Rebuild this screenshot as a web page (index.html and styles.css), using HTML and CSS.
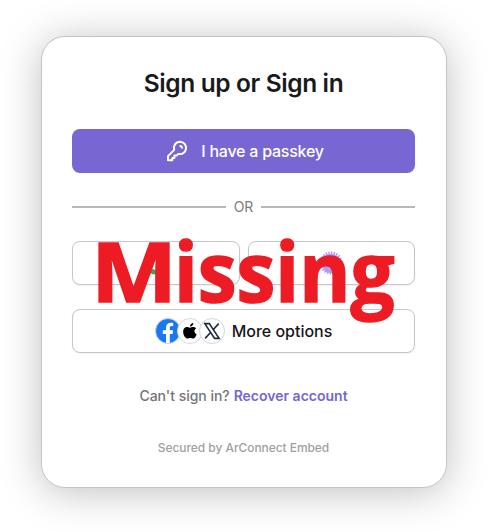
FILE: index.html
```html
<!DOCTYPE html>
<html lang="en">
<head>
<meta charset="utf-8">
<title>Sign up or Sign in</title>
<link rel="stylesheet" href="styles.css">
</head>
<body>
<main class="card">
  <h1 class="title">Sign up or Sign in</h1>
  <button class="button primary">
    <svg class="key" viewBox="0 0 24 24" fill="none" stroke="currentColor" stroke-width="2" stroke-linecap="round" stroke-linejoin="round"><path d="M15.3 7a2.400 2.400 0 0 1 1.700 1.700M15 2.700a6.200 6.200 0 1 1-1.700 12.200l-1.600 1.600H9.400v2.400H7.300v2.300H3v-4.100l6.200-6.200A6.200 6.200 0 0 1 15 2.700Z"/></svg>
    <span class="passkey">I have a passkey</span>
  </button>
  <div class="divider"><span>OR</span></div>
  <div class="providers">
    <button class="button outline">
      <svg class="provider" viewBox="0 0 24 24"><path fill="#4285f4" d="M23 12.3c0-.8-.1-1.6-.2-2.3H12v4.400h6.200a5.300 5.300 0 0 1-2.300 3.500v2.900h3.700c2.200-2 3.400-5 3.400-8.500Z"/><path fill="#34a853" d="M12 23.500c3.100 0 5.700-1 7.600-2.800l-3.700-2.900a7 7 0 0 1-10.400-3.600H1.700v3A11.500 11.500 0 0 0 12 23.500Z"/><path fill="#fbbc05" d="M5.500 14.200a7 7 0 0 1 0-4.400v-3H1.700a11.500 11.500 0 0 0 0 10.400Z"/><path fill="#ea4335" d="M12 5.100c1.700 0 3.200.6 4.400 1.700l3.300-3.200A11.500 11.500 0 0 0 1.700 6.800l3.800 3A6.800 6.800 0 0 1 12 5.100Z"/></svg>
    </button>
    <button class="button outline">
      <svg class="provider" viewBox="0 0 24 24" fill="none" stroke="#ab9aff"><circle cx="12" cy="12" r="10" stroke-width="3" stroke-dasharray="1.400 1.200"/><circle cx="12" cy="12" r="7.500" stroke-width="3.500"/><path stroke-width="2" d="M4 15c2 3 4-1 6 1s3 1 5 1M6 19c2 2 5 2 8 2"/></svg>
    </button>
  </div>
  <button class="button outline more">
    <span class="logos">
      <svg class="logo" viewBox="0 0 26 26"><circle cx="13" cy="13" r="12.5" fill="#1877f2" stroke="#cbd5e1"/><path fill="#fff" d="M11 25v-9H7.800v-3.700H11V9.700c0-3.200 1.900-4.900 4.700-4.900 1.400 0 2.500.2 2.500.2v3.100h-1.500c-1.500 0-1.900.9-1.900 1.900v2.300h3.300l-.6 3.700h-2.700v9Z"/></svg>
      <svg class="logo" viewBox="0 0 26 26"><circle cx="13" cy="13" r="12.5" fill="#fff" stroke="#d3d9e2"/><path d="M16.300 5c.1 2-1.400 3.700-3.300 3.600C12.800 6.800 14.500 5.100 16.300 5ZM19.200 10.300c-2.600 1.600-2.200 4.900.5 6-.7 2-2 4.300-3.500 4.300-1.200 0-1.500-.7-2.900-.7s-1.900.7-3 .7c-2.900 0-5.700-7-3.200-10 1.100-1.300 2.500-1.600 3.600-1.500.9.100 1.700.7 2.400.7s1.900-.8 3.200-.7c1.200 0 2.200.4 2.900 1.200Z"/></svg>
      <svg class="logo" viewBox="0 0 26 26"><circle cx="13" cy="13" r="12.5" fill="#fff" stroke="#cbd5e1"/><path d="M5.800 5.600h4.500l9.800 14.800h-4.500ZM19.700 5.600l-6 6.700M12 14l-5.900 6.400" fill="none" stroke="#1e293b" stroke-width="1.600"/></svg>
    </span>
    <span class="more-label">More options</span>
  </button>
  <p class="recover"><span class="question">Can't sign in?</span> <a class="recover-link">Recover account</a></p>
  <p class="secured">Secured by ArConnect Embed</p>
  <div class="stamp"><span class="stamp-initial">M</span><span class="stamp-rest">issing</span></div>
</main>
</body>
</html>
```

FILE: styles.css
```css
* { box-sizing: border-box; }
body { margin: 0; padding: 36px 41px; height: 532px; background: #fff; font-family: Inter, sans-serif; overflow: hidden; }
.card { position: relative; display: flex; flex-direction: column; width: 406px; height: 452px; padding: 28px 31px 0 30px; border: 1px solid #c4c4c6; border-radius: 24px; background: #fff; box-shadow: 0 4px 40px rgba(0,0,0,.25); }
.title { margin: 0; height: 36px; line-height: 36px; text-align: center; font-size: 24.5px; font-weight: 600; letter-spacing: -.38px; color: #1a1a1c; white-space: nowrap; }
.button { display: flex; align-items: center; justify-content: center; width: 100%; height: 44px; padding: 0; border-radius: 8px; font: 500 16px Inter, sans-serif; }
.primary { margin-top: 28px; padding-left: 2px; border: 0; gap: 12px; background: #7866d3; color: #fff; }
.key { width: 24px; height: 24px; }
.passkey { letter-spacing: -.24px; }
.divider { display: flex; align-items: center; gap: 8px; height: 20px; margin-top: 24px; font-size: 14px; color: #7b7b7d; }
.divider span { position: relative; top: -1px; }
.divider::before, .divider::after { content: ""; flex: 1; height: 2px; background: #b8b8b9; }
.providers { display: flex; gap: 8px; margin-top: 24px; }
.outline { border: 1px solid #c6c6c8; background: #fff; color: #171719; box-shadow: 0 1px 2px rgba(0,0,0,.06); }
.provider { width: 24px; height: 24px; }
.more { margin-top: 24px; gap: 7px; }
.logos { display: flex; }
.logo { width: 26px; height: 26px; margin-right: -4px; }
.logo:last-child { margin-right: 0; }
.more-label { letter-spacing: -.02px; }
.recover { display: flex; justify-content: center; gap: 4px; margin: 33px 0 0; height: 20px; line-height: 20px; font-size: 14px; font-weight: 500; color: #747476; white-space: nowrap; }
.question { letter-spacing: -.03px; }
.recover-link { color: #7866d3; font-weight: 600; letter-spacing: 0; }
.secured { margin: 33px 0 0; height: 18px; line-height: 18px; text-align: center; font-size: 12px; font-weight: 500; letter-spacing: -.06px; color: #a0a0a2; }
.stamp { position: absolute; left: 49px; top: 178px; display: flex; line-height: 110px; font-family: "Open Sans", sans-serif; font-size: 83px; font-weight: 700; color: #ed1c24; -webkit-text-stroke: 1.5px #ed1c24; stroke-linejoin: round; white-space: nowrap; }
.stamp-initial { width: 83px; transform: scaleX(1.1); transform-origin: left center; }
.stamp-rest { transform: scaleX(.94); transform-origin: left center; }
```
